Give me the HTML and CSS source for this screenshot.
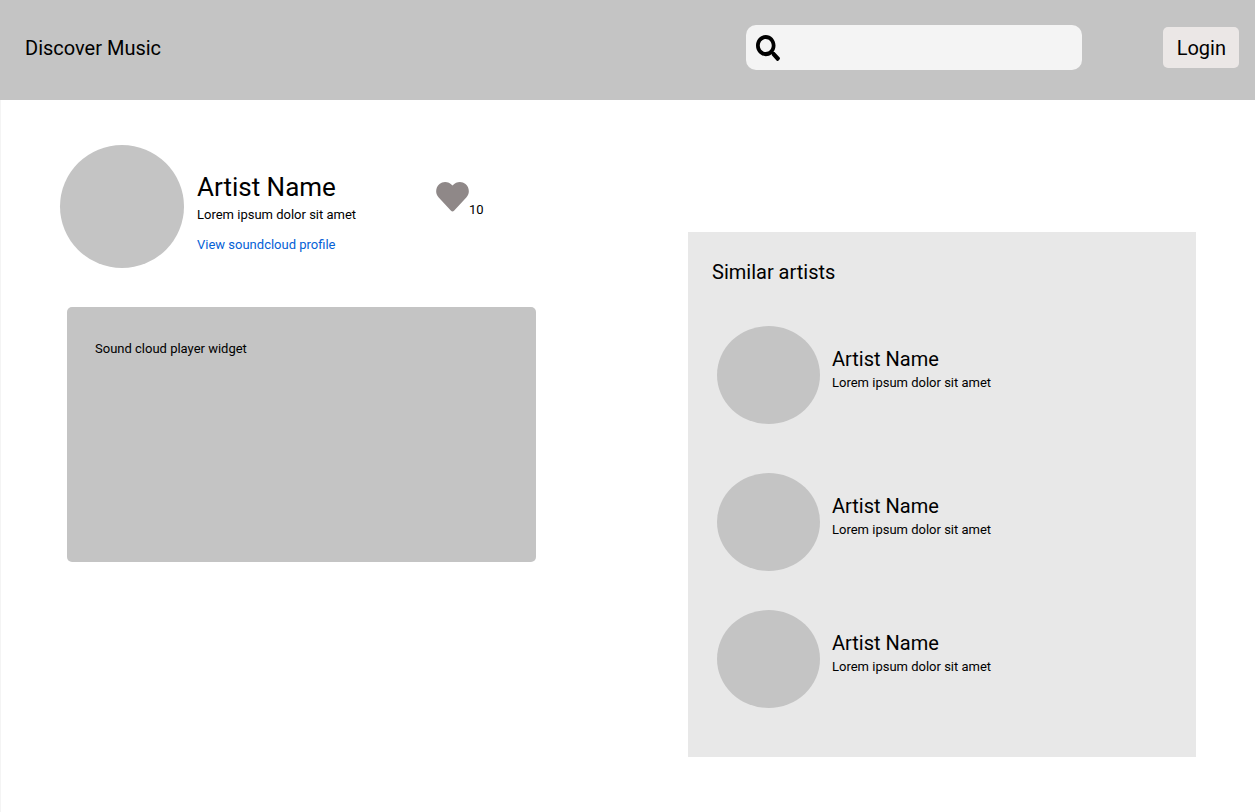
FILE: index.html
```html
<!DOCTYPE html>
<html lang="en">
<head>
<meta charset="utf-8">
<meta name="viewport" content="width=device-width, initial-scale=1">
<title>Discover Music</title>
<link rel="stylesheet" href="styles.css">
</head>
<body>
<header class="topbar">
  <h1 class="brand">Discover Music</h1>
  <form class="search" role="search">
    <label class="search-label" for="search" aria-label="Search">
      <svg class="search-icon" viewBox="0 0 512 512" preserveAspectRatio="none" aria-hidden="true"><path d="M505 442.700 405.300 343c-4.500-4.500-10.600-7-17-7H372c27.600-35.300 44-79.700 44-128C416 93.100 322.900 0 208 0S0 93.100 0 208s93.100 208 208 208c48.300 0 92.700-16.400 128-44v16.300c0 6.400 2.500 12.500 7 17l99.700 99.700c9.400 9.400 24.600 9.400 33.900 0l28.300-28.300c9.400-9.400 9.400-24.600.1-34zM208 336c-70.700 0-128-57.200-128-128 0-70.700 57.200-128 128-128 70.700 0 128 57.200 128 128 0 70.700-57.200 128-128 128z"/></svg>
    </label>
    <input class="search-input" id="search" type="search">
  </form>
  <button class="login" type="button">Login</button>
</header>
<main class="page">
  <section class="artist">
    <div class="profile">
      <div class="avatar avatar-large"></div>
      <div class="profile-text">
        <h2 class="profile-name">Artist Name</h2>
        <p class="caption">Lorem ipsum dolor sit amet</p>
        <a class="profile-link" href="#">View soundcloud profile</a>
      </div>
      <button class="like" type="button" aria-label="Like, 10 likes">
        <svg class="heart" viewBox="0 0 33 30" aria-hidden="true"><path d="M16.500 3.500C20.500-.8 26-.9 29.500 2.100c4.200 3.600 4.400 9.600.8 13.300L18 28.700c-.9.900-2.100.9-3 0L2.700 15.400C-.9 11.700-.7 5.700 3.500 2.100 7-.9 12.500-.8 16.500 3.500Z"/></svg>
        <span>10</span>
      </button>
    </div>
    <div class="player"><p>Sound cloud player widget</p></div>
  </section>
  <aside class="similar">
    <h2 class="similar-title">Similar artists</h2>
    <ul class="similar-list">
      <li class="similar-item"><div class="avatar avatar-small"></div><div class="similar-text"><h3 class="similar-name">Artist Name</h3><p class="caption">Lorem ipsum dolor sit amet</p></div></li>
      <li class="similar-item"><div class="avatar avatar-small"></div><div class="similar-text"><h3 class="similar-name">Artist Name</h3><p class="caption">Lorem ipsum dolor sit amet</p></div></li>
      <li class="similar-item"><div class="avatar avatar-small"></div><div class="similar-text"><h3 class="similar-name">Artist Name</h3><p class="caption">Lorem ipsum dolor sit amet</p></div></li>
    </ul>
  </aside>
</main>
</body>
</html>
```
FILE: styles.css
```css
* {
  box-sizing: border-box;
}

body,
h1,
h2,
h3,
p,
ul {
  margin: 0;
  padding: 0;
  font-weight: 400;
}

body {
  display: flex;
  flex-direction: column;
  min-height: 100vh;
  background: #fff;
  color: #000;
  font-family: Roboto, sans-serif;
  font-size: 13px;
  line-height: 16px;
}

.topbar {
  display: flex;
  align-items: center;
  padding: 25px 16px 30px 25px;
  background: #c4c4c4;
}

.brand {
  margin-right: auto;
  font-size: 20px;
  line-height: 24px;
}

.search {
  display: flex;
  align-items: center;
  flex: 0 1 336px;
  height: 45px;
  margin-right: 81px;
  padding: 0 10px;
  border-radius: 10px;
  background: #f4f4f4;
}

.search-label,
.search-icon {
  display: block;
  width: 24px;
  height: 26px;
}

.search-input {
  flex: 1;
  min-width: 0;
  height: 32px;
  margin-left: 8px;
  border: 0;
  outline: 0;
  background: transparent;
  font: inherit;
}

.login {
  padding: 9px 13px 8px 14px;
  border: 0;
  border-radius: 5px;
  background: #ebe7e6;
  color: #000;
  font-family: inherit;
  font-size: 20px;
  line-height: 24px;
}

.page {
  display: grid;
  grid-template-columns: minmax(0, 476fr) minmax(0, 508fr);
  column-gap: 152px;
  align-items: start;
  flex: 1;
  padding: 45px 59px 55px;
  border-left: 1px solid #f4f4f4;
}

.profile {
  display: flex;
}

.avatar {
  flex: none;
  border-radius: 50%;
  background: #c4c4c4;
}

.avatar-large {
  width: 124px;
  height: 123px;
}

.profile-text {
  flex: none;
  width: 238px;
  padding: 26px 0 0 13px;
}

.profile-name {
  margin-bottom: 4px;
  font-size: 26px;
  line-height: 32px;
}

.profile-link {
  display: inline-block;
  margin-top: 14px;
  color: #0561d6;
  text-decoration: none;
}

.like {
  display: flex;
  align-items: flex-end;
  align-self: flex-start;
  margin-top: 37px;
  padding: 0 0 0 14px;
  border: 0;
  background: none;
  color: #000;
  font: inherit;
}

.heart {
  width: 33px;
  height: 30px;
  margin-bottom: 6px;
  fill: #8f8888;
}

.player {
  min-height: 255px;
  margin: 39px 0 0 7px;
  padding: 34px 28px;
  border-radius: 5px;
  background: #c4c4c4;
}

.similar {
  margin-top: 87px;
  padding: 28px 24px 49px;
  background: #e8e8e8;
}

.similar-title {
  font-size: 20px;
  line-height: 24px;
}

.similar-list {
  display: grid;
  row-gap: 39px;
  margin-top: 42px;
  padding-left: 5px;
  list-style: none;
}

.similar-item {
  display: flex;
}

.similar-item:first-child {
  margin-bottom: 10px;
}

.avatar-small {
  width: 103px;
  height: 98px;
}

.similar-text {
  padding: 21px 0 0 12px;
}

.similar-name {
  margin-bottom: 4px;
  font-size: 20px;
  line-height: 24px;
}
```
